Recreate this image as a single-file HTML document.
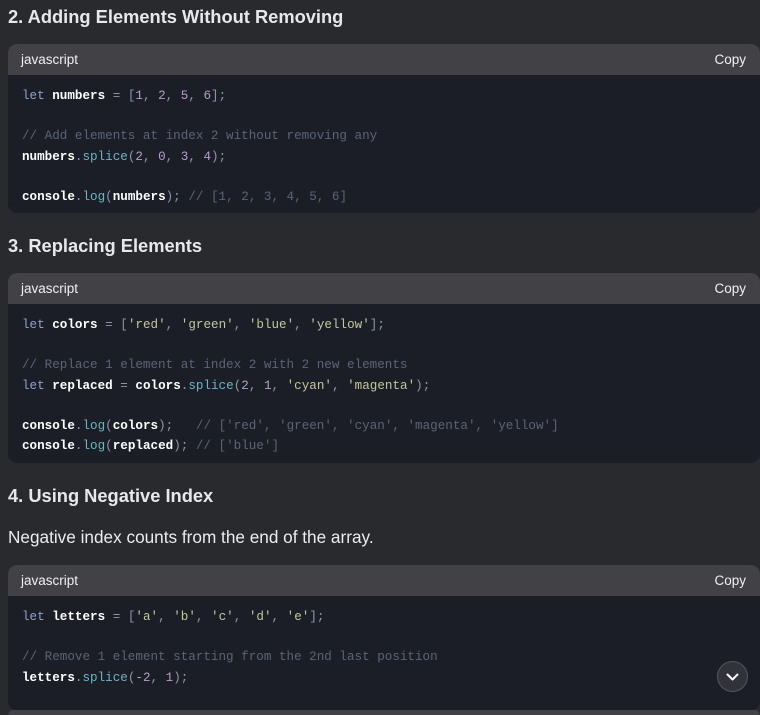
<!DOCTYPE html>
<html><head><style>
body{margin:0;background:#292a2d;width:760px;height:715px;overflow:hidden;font-family:"Liberation Sans",sans-serif;color:#ececec;position:relative}
h3{position:absolute;left:8px;margin:0;font-size:18.3px;font-weight:bold;color:#e8e8ea;white-space:nowrap}
p{position:absolute;left:8px;margin:0;font-size:17.2px;color:#ececec}
.blk{position:absolute;left:8px;width:752px;border-radius:9px;overflow:hidden;background:#1b1e27}
.hd{height:31px;background:#414146;display:flex;justify-content:space-between;align-items:center;padding:0 14px 0 13px;font-size:13.5px;color:#f0f0f0}
pre{margin:0;padding:11px 14px;font-family:"Liberation Mono",monospace;font-size:12.6px;line-height:20.2px;color:#abb2bf}
.k{color:#8fa3cc}.v{color:#fff;font-weight:bold}.p{color:#8d96a8}.n{color:#b69ec8}.c{color:#5b6476}.m{color:#6db4c4}.s{color:#c6c79a}
.btn{position:absolute;left:717px;top:661px;width:31px;height:31px;border-radius:50%;background:#32333a;border:1px solid #55565c;box-sizing:border-box}
</style></head><body>
<h3 style="top:6px">2. Adding Elements Without Removing</h3>
<div class="blk" style="top:44px;height:169px"><div class="hd"><span>javascript</span><span>Copy</span></div>
<pre><span class="k">let</span> <span class="v">numbers</span> <span class="p">=</span> <span class="p">[</span><span class="n">1</span><span class="p">,</span> <span class="n">2</span><span class="p">,</span> <span class="n">5</span><span class="p">,</span> <span class="n">6</span><span class="p">];</span>

<span class="c">// Add elements at index 2 without removing any</span>
<span class="v">numbers</span><span class="p">.</span><span class="m">splice</span><span class="p">(</span><span class="n">2</span><span class="p">,</span> <span class="n">0</span><span class="p">,</span> <span class="n">3</span><span class="p">,</span> <span class="n">4</span><span class="p">);</span>

<span class="v">console</span><span class="p">.</span><span class="m">log</span><span class="p">(</span><span class="v">numbers</span><span class="p">);</span> <span class="c">// [1, 2, 3, 4, 5, 6]</span></pre></div>
<h3 style="top:235px">3. Replacing Elements</h3>
<div class="blk" style="top:273px;height:190px"><div class="hd"><span>javascript</span><span>Copy</span></div>
<pre><span class="k">let</span> <span class="v">colors</span> <span class="p">=</span> <span class="p">[</span><span class="s">'red'</span><span class="p">,</span> <span class="s">'green'</span><span class="p">,</span> <span class="s">'blue'</span><span class="p">,</span> <span class="s">'yellow'</span><span class="p">];</span>

<span class="c">// Replace 1 element at index 2 with 2 new elements</span>
<span class="k">let</span> <span class="v">replaced</span> <span class="p">=</span> <span class="v">colors</span><span class="p">.</span><span class="m">splice</span><span class="p">(</span><span class="n">2</span><span class="p">,</span> <span class="n">1</span><span class="p">,</span> <span class="s">'cyan'</span><span class="p">,</span> <span class="s">'magenta'</span><span class="p">);</span>

<span class="v">console</span><span class="p">.</span><span class="m">log</span><span class="p">(</span><span class="v">colors</span><span class="p">);</span>   <span class="c">// ['red', 'green', 'cyan', 'magenta', 'yellow']</span>
<span class="v">console</span><span class="p">.</span><span class="m">log</span><span class="p">(</span><span class="v">replaced</span><span class="p">);</span> <span class="c">// ['blue']</span></pre></div>
<h3 style="top:485px">4. Using Negative Index</h3>
<p style="top:527px">Negative index counts from the end of the array.</p>
<div class="blk" style="top:565px;height:145px"><div class="hd"><span>javascript</span><span>Copy</span></div>
<pre><span class="k">let</span> <span class="v">letters</span> <span class="p">=</span> <span class="p">[</span><span class="s">'a'</span><span class="p">,</span> <span class="s">'b'</span><span class="p">,</span> <span class="s">'c'</span><span class="p">,</span> <span class="s">'d'</span><span class="p">,</span> <span class="s">'e'</span><span class="p">];</span>

<span class="c">// Remove 1 element starting from the 2nd last position</span>
<span class="v">letters</span><span class="p">.</span><span class="m">splice</span><span class="p">(</span><span class="n">-2</span><span class="p">,</span> <span class="n">1</span><span class="p">);</span></pre></div>
<div style="position:absolute;left:8px;top:710px;width:752px;height:5px;background:#414146;border-radius:6px 6px 0 0"></div>
<div class="btn"><svg width="29" height="29" viewBox="0 0 29 29" style="position:absolute;left:0;top:0"><path d="M9.5 12.5l5 5 5-5" fill="none" stroke="#fff" stroke-width="2" stroke-linecap="round" stroke-linejoin="round"/></svg></div>
</body></html>
